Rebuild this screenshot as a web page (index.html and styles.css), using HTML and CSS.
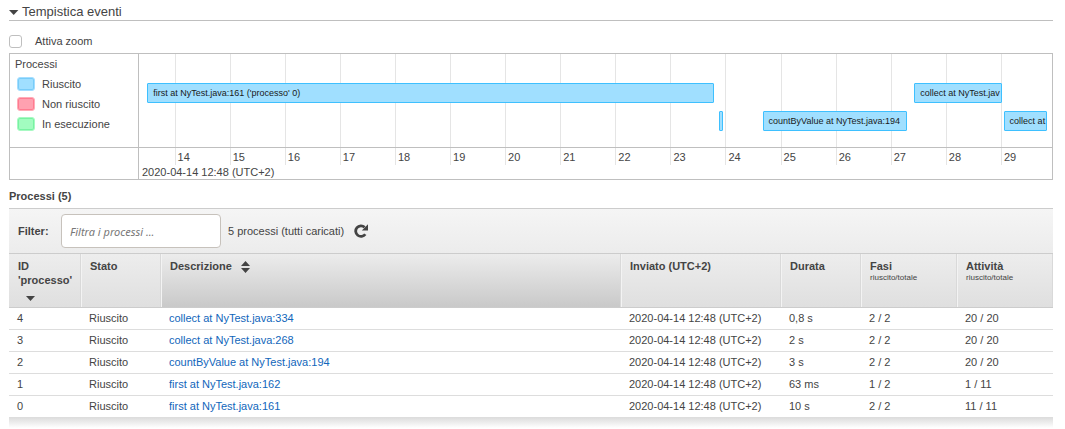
FILE: index.html
```html
<!DOCTYPE html>
<html lang="it">
<head>
<meta charset="utf-8">
<title>Processi</title>
<link rel="stylesheet" href="styles.css">
</head>
<body>
<main class="page">
  <h2 class="section-title">
    <button class="toggle" type="button" aria-expanded="true">
      <svg class="caret" width="10" height="5" viewBox="0 0 10 5" aria-hidden="true"><path d="M0 0h9.4L4.7 5z"/></svg>
      Tempistica eventi
    </button>
  </h2>
  <label class="zoom-option"><input class="checkbox" type="checkbox">Attiva zoom</label>

  <section class="timeline">
    <div class="legend">
      <div>Processi</div>
      <ul class="legend-list">
        <li class="legend-item"><span class="swatch swatch-ok"></span>Riuscito</li>
        <li class="legend-item"><span class="swatch swatch-failed"></span>Non riuscito</li>
        <li class="legend-item"><span class="swatch swatch-running"></span>In esecuzione</li>
      </ul>
    </div>
    <div class="axis-rule"></div>
    <div class="ticks">
      <span class="tick">14</span><span class="tick">15</span><span class="tick">16</span><span class="tick">17</span><span class="tick">18</span><span class="tick">19</span><span class="tick">20</span><span class="tick">21</span><span class="tick">22</span><span class="tick">23</span><span class="tick">24</span><span class="tick">25</span><span class="tick">26</span><span class="tick">27</span><span class="tick">28</span><span class="tick">29</span>
    </div>
    <div class="plot">
      <div class="lane">
        <div class="bar" style="left:0.9%;width:62.1%">first at NyTest.java:161 ('processo' 0)</div>
        <div class="bar" style="left:84.9%;width:9.6%">collect at NyTest.jav</div>
      </div>
      <div class="lane">
        <div class="bar bar-short" style="left:63.5%;width:0.5%"></div>
        <div class="bar" style="left:68.3%;width:15.8%">countByValue at NyTest.java:194</div>
        <div class="bar" style="left:94.7%;width:4.8%">collect at</div>
      </div>
    </div>
    <div class="axis-date">2020-04-14 12:48 (UTC+2)</div>
  </section>

  <h3 class="list-title">Processi (5)</h3>
  <section class="panel">
    <div class="toolbar">
      <label class="filter-label" for="filter">Filter:</label>
      <input class="filter-input" id="filter" type="text" placeholder="Filtra i processi ...">
      <span class="count">5 processi (tutti caricati)</span>
      <button class="refresh" type="button" aria-label="Aggiorna">
        <svg class="icon" width="14" height="14" viewBox="0 0 14 14" aria-hidden="true"><path d="M11.3 10.2A5.300 5.300 0 1 1 10.600 3.200" fill="none" stroke="#444" stroke-width="2.8"/><path d="M14 .3v6.200H7.800z" fill="#444"/></svg>
      </button>
    </div>
    <table class="jobs">
      <colgroup><col class="col-id"><col class="col-state"><col><col class="col-sent"><col class="col-time"><col class="col-stages"><col class="col-tasks"></colgroup>
      <thead>
        <tr>
          <th>ID 'processo'<svg class="sorted" width="9" height="5" viewBox="0 0 9 5" aria-hidden="true"><path d="M0 0h9L4.5 5z"/></svg></th>
          <th>Stato</th>
          <th class="active">Descrizione<svg class="sort" width="9" height="12" viewBox="0 0 9 12" aria-hidden="true"><path d="M0 5h9L4.500 0zM0 7h9L4.500 12z"/></svg></th>
          <th>Inviato (UTC+2)</th>
          <th>Durata</th>
          <th>Fasi<small class="sub">riuscito/totale</small></th>
          <th>Attività<small class="sub">riuscito/totale</small></th>
        </tr>
      </thead>
      <tbody>
        <tr><td>4</td><td>Riuscito</td><td><a href="#job-4">collect at NyTest.java:334</a></td><td>2020-04-14 12:48 (UTC+2)</td><td>0,8 s</td><td>2 / 2</td><td>20 / 20</td></tr>
        <tr><td>3</td><td>Riuscito</td><td><a href="#job-3">collect at NyTest.java:268</a></td><td>2020-04-14 12:48 (UTC+2)</td><td>2 s</td><td>2 / 2</td><td>20 / 20</td></tr>
        <tr><td>2</td><td>Riuscito</td><td><a href="#job-2">countByValue at NyTest.java:194</a></td><td>2020-04-14 12:48 (UTC+2)</td><td>3 s</td><td>2 / 2</td><td>20 / 20</td></tr>
        <tr><td>1</td><td>Riuscito</td><td><a href="#job-1">first at NyTest.java:162</a></td><td>2020-04-14 12:48 (UTC+2)</td><td>63 ms</td><td>1 / 2</td><td>1 / 11</td></tr>
        <tr><td>0</td><td>Riuscito</td><td><a href="#job-0">first at NyTest.java:161</a></td><td>2020-04-14 12:48 (UTC+2)</td><td>10 s</td><td>2 / 2</td><td>11 / 11</td></tr>
      </tbody>
    </table>
    <div class="panel-shadow"></div>
  </section>
</main>
</body>
</html>
```
FILE: styles.css
```css
* { box-sizing: border-box; }

body {
  margin: 0;
  background: #fff;
  color: #444;
  font: 11px/14px "Liberation Sans", Arial, sans-serif;
}

button { border: 0; padding: 0; background: none; color: inherit; font: inherit; }

.page { padding: 4px 12px 0 9px; }

.section-title {
  margin: 0;
  border-bottom: 1px solid #bfbfbf;
  font-size: 13px;
  font-weight: 400;
  line-height: 16px;
}
.toggle { display: flex; align-items: center; gap: 3px; }
.caret { fill: #444; }

.zoom-option { display: flex; align-items: center; gap: 13px; padding: 13px 0 5px; }
.checkbox {
  appearance: none;
  width: 13px;
  height: 13px;
  margin: 0;
  border: 1px solid #bfbfbf;
  border-radius: 3px;
  background: #fff;
}

.timeline {
  display: grid;
  grid-template-columns: 129px 1fr;
  grid-template-rows: 94px 17px 14px;
  border: 1px solid #bfbfbf;
}
.legend {
  grid-area: 1 / 1;
  padding: 3px 5px;
}
.legend-list { margin: 3px 0 0; padding: 0 0 0 2px; list-style: none; }
.legend-item { display: flex; align-items: center; gap: 7px; height: 20px; }
.swatch { width: 18px; height: 14px; border: 1px solid; border-radius: 3px; }
.swatch-ok { background: #a0dfff; border-color: #a5deff; box-shadow: inset 0 0 0 1px #78ccf8; }
.swatch-failed { background: #ffa1b0; border-color: #ffadb9; box-shadow: inset 0 0 0 1px #ff7b90; }
.swatch-running { background: #a2fcc0; border-color: #a8f9c3; box-shadow: inset 0 0 0 1px #78f2a2; }
.legend, .axis-rule { border-right: 1px solid #bfbfbf; }
.axis-rule { grid-area: 2 / 1 / 4 / 2; }

.ticks {
  grid-area: 1 / 2 / 3 / 3;
  display: grid;
  grid-template-columns: repeat(15, 55fr) 51fr;
  padding-left: 3.9%;
}
.tick {
  display: flex;
  align-items: flex-end;
  padding: 0 0 1px 2px;
  border-left: 1px solid #e5e5e5;
}
.plot {
  grid-area: 1 / 1 / 2 / 3;
  display: flex;
  flex-direction: column;
  gap: 8px;
  padding: 29px 0 0 129px;
  border-bottom: 1px solid #bfbfbf;
}
.lane { position: relative; height: 20px; }
.bar {
  position: absolute;
  height: 20px;
  padding: 0 0 0 5px;
  overflow: hidden;
  border: 1px solid #3ec0ff;
  border-radius: 1px;
  background: #a0dfff;
  color: #1a1a1a;
  font-size: 9px;
  line-height: 18px;
  white-space: nowrap;
}
.bar-short { padding: 0; }
.axis-date { grid-area: 3 / 2; padding-left: 3px; }

.list-title { margin: 9px 0 5px; font-size: 11px; line-height: 14px; }

.toolbar {
  display: flex;
  align-items: center;
  padding: 5px 9px;
  border-top: 1px solid #ccc;
  background: linear-gradient(#f5f5f5, #ececec);
}
.filter-label { width: 43px; font-weight: 700; }
.filter-input {
  width: 160px;
  height: 34px;
  margin-right: 7px;
  padding: 0 8px;
  border: 1px solid #c7c2bc;
  border-radius: 4px;
  background: #fff;
  color: #444;
  font: 11px "Noto Sans", sans-serif;
}
.filter-input::placeholder { color: #777; font-style: italic; opacity: 1; }
.refresh { margin-left: 10px; }
.icon { display: block; }

.jobs { width: 100%; border-collapse: separate; border-spacing: 0; table-layout: fixed; }
.col-id { width: 72px; }
.col-state, .col-time { width: 80px; }
.col-sent { width: 160px; }
.col-stages, .col-tasks { width: 96px; }
.jobs th {
  height: 55px;
  padding: 5px 0 0 9px;
  border: solid #ccc;
  border-width: 1px 0;
  background: linear-gradient(#ededed, #dfdfdf);
  box-shadow: inset 1px 0 #f3f3f3, inset -1px 0 #d9d9d9;
  text-align: left;
  vertical-align: top;
}
.jobs th:first-child { box-shadow: inset -1px 0 #d9d9d9; }
.jobs .active { background: linear-gradient(#ececec, #c9c9c9); }
.sorted { display: block; margin: 9px 0 0 8px; fill: #444; }
.sort { margin-left: 9px; vertical-align: middle; fill: #444; }
.sub { display: block; font-size: 8px; font-weight: 400; line-height: 10px; }
.jobs td { height: 22px; padding: 0 0 2px 8px; border-bottom: 1px solid #ddd; }
.jobs a { color: #1166bb; text-decoration: none; }
.panel-shadow { height: 10px; background: linear-gradient(#dedede, #fff); }
```
